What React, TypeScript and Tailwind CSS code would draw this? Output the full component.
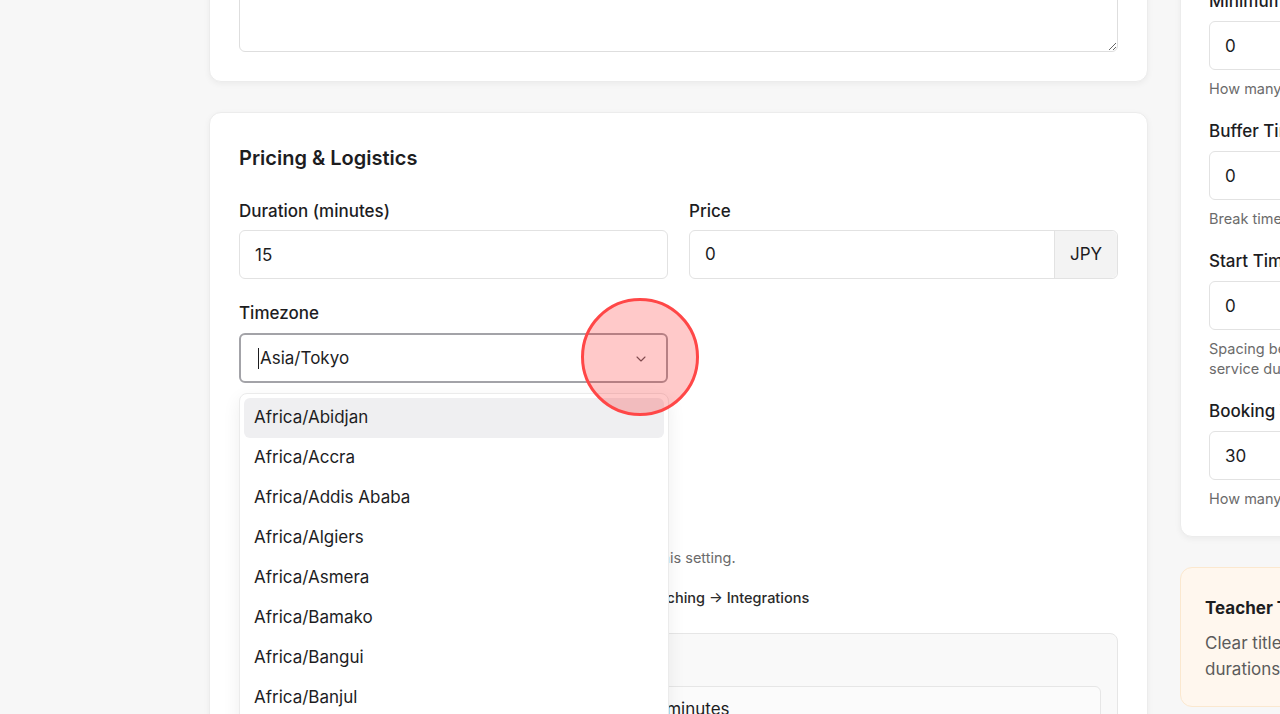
import React from "react";
import { ChevronDown } from "lucide-react";

const zones = [
  "Africa/Abidjan",
  "Africa/Accra",
  "Africa/Addis Ababa",
  "Africa/Algiers",
  "Africa/Asmera",
  "Africa/Bamako",
  "Africa/Bangui",
  "Africa/Banjul",
  "Africa/Bissau",
];

function Field({
  label,
  value,
  help,
}: {
  label: string;
  value: string;
  help: React.ReactNode;
}) {
  return (
    <div className="flex flex-col">
      <label className="text-[17px] leading-6 font-medium whitespace-nowrap">{label}</label>
      <input
        readOnly
        value={value}
        className="mt-2 h-[49px] w-full rounded-md border border-[#e2e2e2] bg-white px-[15px] text-[17px] outline-none"
      />
      <p className="mt-[9px] text-[14.5px] leading-5 text-[#6b6b6b] whitespace-nowrap">{help}</p>
    </div>
  );
}

export default function App() {
  return (
    <div className="h-[714px] overflow-hidden bg-[#f7f7f7] font-['Inter',sans-serif] text-[#1d1d1f]">
      <div className="mt-[-99px] flex items-start gap-8 pl-[209px]">
        {/* main column */}
        <div className="flex w-[939px] shrink-0 flex-col gap-[30px]">
          <section className="rounded-xl border border-[#ececec] bg-white p-[29px] shadow-[0_2px_6px_rgba(0,0,0,0.05)]">
            <textarea
              readOnly
              className="block h-[121px] w-full resize-y rounded-md border border-[#dedede] bg-white outline-none"
            />
          </section>

          <section className="relative rounded-xl border border-[#ececec] bg-white px-[29px] pt-[31px] pb-8 shadow-[0_2px_6px_rgba(0,0,0,0.05)]">
            <h2 className="text-xl leading-7 font-semibold">Pricing &amp; Logistics</h2>

            <div className="mt-[27px] grid grid-cols-2 gap-x-[21px]">
              <div>
                <label className="block text-[17px] leading-6 font-medium">Duration (minutes)</label>
                <input
                  readOnly
                  value="15"
                  className="mt-[7px] h-[49px] w-full rounded-md border border-[#e2e2e2] px-[15px] text-[17px] outline-none"
                />
              </div>
              <div>
                <label className="block text-[17px] leading-6 font-medium">Price</label>
                <div className="mt-[7px] flex h-[49px] rounded-md border border-[#e2e2e2]">
                  <input readOnly value="0" className="min-w-0 flex-1 px-[15px] text-[17px] outline-none" />
                  <span className="flex w-[63px] items-center justify-center rounded-r-md border-l border-[#e2e2e2] bg-[#f3f3f3] text-[17px]">
                    JPY
                  </span>
                </div>
              </div>
            </div>

            <div className="mt-[22px] grid grid-cols-2 gap-x-[21px]">
              <div className="relative">
                <label className="block text-[17px] leading-6 font-medium">Timezone</label>
                <div className="mt-2 flex h-[50px] items-center rounded-md border-2 border-[#a3a3a8] pt-px pr-[17px] pl-[17px]">
                  <span className="mr-px h-[21px] w-px bg-[#1d1d1f]" />
                  <span className="flex-1 text-[17px]">Asia/Tokyo</span>
                  <ChevronDown size={16} strokeWidth={1.6} className="text-[#5f5f64]" />
                </div>

                {/* open timezone list */}
                <ul className="absolute top-[92px] left-0 z-10 h-[340px] w-[430px] overflow-hidden rounded-lg border border-[#ebebeb] bg-white p-[4px] shadow-[0_6px_18px_rgba(0,0,0,0.07)]">
                  {zones.map((z, i) => (
                    <li
                      key={z}
                      className={`flex h-10 items-center rounded-md px-[10px] text-[17px] ${i === 0 ? "bg-[#efeff1]" : ""}`}
                    >
                      {z}
                    </li>
                  ))}
                </ul>
              </div>
              <div />
            </div>

            <div className="mt-5 grid grid-cols-2 gap-x-[21px]">
              <div>
                <label className="block text-[17px] leading-6 font-medium">Meeting Type</label>
                <div className="mt-2 h-[49px] rounded-md border border-[#e2e2e2]" />
                <label className="mt-5 flex h-6 items-center gap-2 text-[15px]">
                  <input type="checkbox" readOnly className="h-4 w-4" />
                  Create a video link automatically
                </label>
              </div>
              <div />
            </div>

            <p className="mt-5 text-[14.5px] leading-5 text-[#6b6b6b]">
              Students see lesson times in their local time, converted from this setting.
            </p>
            <p className="mt-5 text-[14.5px] leading-5 font-medium text-[#2a2a2a]">
              Connect your video account for lessons under Settings → Teaching → Integrations
            </p>

            <div className="mt-[25px] rounded-lg border border-[#e6e6e6] bg-[#f9f9f9] px-4 pt-4 pb-4">
              <h3 className="text-[17px] leading-6 font-medium">Lesson Preview</h3>
              <div className="mt-3 rounded-md border border-[#e6e6e6] bg-[#fbfbfb] px-4 py-[10px] text-[17px] leading-6">
                Standard private lessons, booked in blocks of 15 minutes
              </div>
            </div>
          </section>
        </div>

        {/* side column */}
        <div className="mt-[57px] flex w-[350px] shrink-0 flex-col gap-[30px]">
          <section className="flex flex-col gap-5 rounded-xl border border-[#ececec] bg-white px-[28px] pt-[30px] pb-[27px] shadow-[0_2px_6px_rgba(0,0,0,0.05)]">
            <Field
              label="Minimum Notice (hours)"
              value="0"
              help="How many hours ahead students must book"
            />
            <Field label="Buffer Time (minutes)" value="0" help="Break time between lessons" />
            <Field
              label="Start Time Interval (minutes)"
              value="0"
              help={
                <>
                  Spacing between available start times.
                  <br />
                  service duration is used when set to 0.
                </>
              }
            />
            <Field
              label="Booking Window (days)"
              value="30"
              help="How many days ahead students can book"
            />
          </section>

          <section className="rounded-xl border border-[#fbe8cf] bg-[#fff7ee] px-6 pt-[28px] pb-6">
            <h3 className="text-[17px] leading-6 font-bold">Teacher Tips</h3>
            <p className="mt-[10px] text-[17px] leading-[26px] whitespace-nowrap text-[#5b5b5b]">
              Clear titles and accurate lesson
              <br />
              durations help students book.
            </p>
          </section>
        </div>
      </div>

      {/* click marker */}
      <div className="pointer-events-none fixed top-[298px] left-[581px] z-20 h-[118px] w-[118px] rounded-full border-[3px] border-[#ff4747] bg-[rgba(255,0,0,0.21)]" />
    </div>
  );
}
